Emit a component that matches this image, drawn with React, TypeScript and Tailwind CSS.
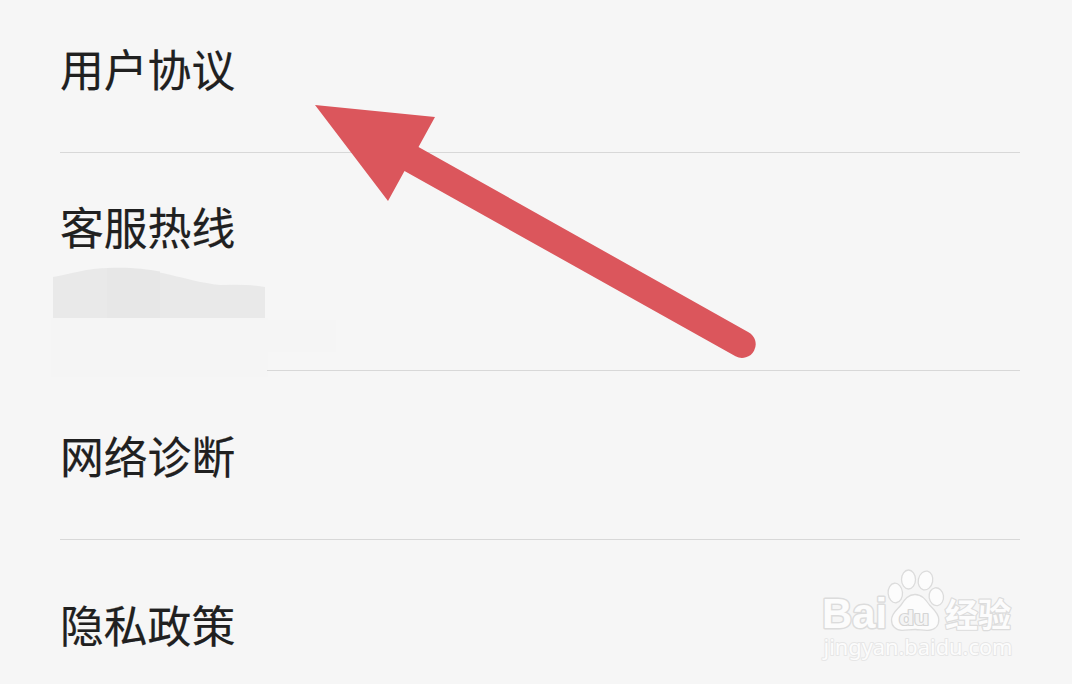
const heading =
  "block h-[64px] text-[43.8px] leading-[64px] text-[#202020] [-webkit-text-stroke:0.2px_#202020]";

function Watermark() {
  return (
    <svg className="absolute left-[810px] top-[560px]" width="220" height="110" viewBox="0 0 220 110">
      <g fill="#fcfcfc" stroke="#dcdcdc" strokeWidth="1.3" strokeLinejoin="round">
        <text x="12" y="68" textLength="65" lengthAdjust="spacingAndGlyphs" fontFamily="Liberation Sans, sans-serif" fontWeight="700" fontSize="42" strokeWidth="3" paintOrder="stroke">Bai</text>
        <ellipse cx="85.3" cy="33" rx="7.2" ry="9.8" transform="rotate(-5 85.3 33)" />
        <ellipse cx="98.5" cy="19.5" rx="7" ry="9.5" />
        <ellipse cx="115.5" cy="20.5" rx="7.2" ry="9.5" transform="rotate(12 115.5 20.5)" />
        <ellipse cx="126.3" cy="36.7" rx="7.2" ry="9" transform="rotate(-8 126.3 36.7)" />
        <path d="M105 34.5C98 34.5 94.5 40 91 45C87.5 49.5 81.5 53 81.5 60C81.5 66.5 86 70.3 92 70.3C97 70.3 101 69.4 105.5 69.5C110 69.6 113 70.7 118 70.4C125 70 129 65.7 128.8 59.5C128.6 53 123 49 119.5 45C116 40 112 34.5 105 34.5Z" />
        <text x="89" y="64.5" textLength="30" lengthAdjust="spacingAndGlyphs" fontFamily="Liberation Sans, sans-serif" fontWeight="700" fontSize="21" fill="#f4f4f4" stroke="#d5d5d5" strokeWidth="2.2" paintOrder="stroke">du</text>
        <text x="135" y="66.5" textLength="66" lengthAdjust="spacingAndGlyphs" fontFamily="Noto Sans CJK SC, sans-serif" fontWeight="700" fontSize="33" strokeWidth="2.4" paintOrder="stroke">经验</text>
        <text x="13.5" y="94.5" textLength="189" lengthAdjust="spacingAndGlyphs" fontFamily="Noto Sans, sans-serif" fontWeight="400" fontSize="22" strokeWidth="1.9" paintOrder="stroke" stroke="#e6e6e6">jingyan.baidu.com</text>
      </g>
    </svg>
  );
}

export default function App() {
  return (
    <main className="relative h-[684px] w-[1072px] overflow-hidden bg-[#f6f6f6] pl-[60px] pr-[52px] font-['Noto_Sans_CJK_SC',sans-serif]">
      <section className="h-[153px] border-b border-[#d8d8d8] pt-[36px]"><span className={heading}>用户协议</span></section>
      <section className="flex h-[218px] flex-col pt-[41px]">
        <span className={heading}>客服热线</span>
        <svg className="-ml-[10px] mt-[7px] block" width="290" height="114" viewBox="50 265 290 114">
          <rect x="51" y="318" width="217" height="59" fill="#f5f5f5" />
          <rect x="268" y="320" width="68" height="32" fill="#f5f5f5" />
          <path d="M53 277C72 274 86 268 110 268C163 268 183 281 220 285Q250 284 265 287V318H53Z" fill="#e9e9e9" />
          <path d="M107 268.1C130 267 145 269 160 271.5V318H107Z" fill="#e7e7e7" />
        </svg>
        <div className="-mt-[9px] ml-[207px] h-px shrink-0 bg-[#d8d8d8]" />
      </section>
      <section className="h-[169px] border-b border-[#d8d8d8] pt-[52px]"><span className={heading}>网络诊断</span></section>
      <section className="pt-[52px]"><span className={heading}>隐私政策</span></section>
      <svg className="absolute left-0 top-0" width="1072" height="400" viewBox="0 0 1072 400">
        <path d="M315 105L435 117L418.5 147L748.5 332.2A13.6 13.6 0 0 1 735.5 356.3L404.5 171L388 201Z" fill="#db565c" />
      </svg>
      <Watermark />
    </main>
  );
}
